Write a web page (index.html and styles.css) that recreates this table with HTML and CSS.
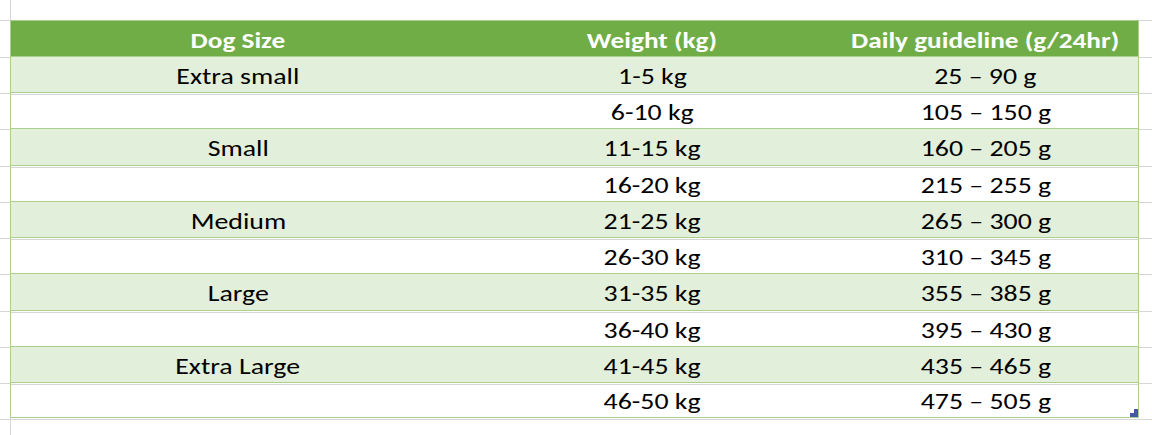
FILE: index.html
```html
<!DOCTYPE html>
<html lang="en">
<head>
<meta charset="utf-8">
<title>Dog food guideline</title>
<link rel="stylesheet" href="styles.css">
</head>
<body>
<div class="sheet">
  <div class="strip-top"></div>

  <div class="row head h36">
    <div class="gut gut-l"></div>
    <div class="cells">
      <div class="cell col-a"><span class="t">Dog Size</span></div>
      <div class="cell col-b"><span class="t">Weight (kg)</span></div>
      <div class="cell col-c"><span class="t">Daily guideline (g/24hr)</span></div>
    </div>
    <div class="gut gut-r"></div>
  </div>

  <div class="row band h36">
    <div class="gut gut-l"></div>
    <div class="cells">
      <div class="cell col-a"><span class="t">Extra small</span></div>
      <div class="cell col-b"><span class="t">1-5 kg</span></div>
      <div class="cell col-c"><span class="t">25 – 90 g</span></div>
    </div>
    <div class="gut gut-r"></div>
  </div>

  <div class="row plain h36">
    <div class="gut gut-l"></div>
    <div class="cells">
      <div class="cell col-a"></div>
      <div class="cell col-b"><span class="t">6-10 kg</span></div>
      <div class="cell col-c"><span class="t">105 – 150 g</span></div>
    </div>
    <div class="gut gut-r"></div>
  </div>

  <div class="row band h37">
    <div class="gut gut-l"></div>
    <div class="cells">
      <div class="cell col-a"><span class="t">Small</span></div>
      <div class="cell col-b"><span class="t">11-15 kg</span></div>
      <div class="cell col-c"><span class="t">160 – 205 g</span></div>
    </div>
    <div class="gut gut-r"></div>
  </div>

  <div class="row plain h36">
    <div class="gut gut-l"></div>
    <div class="cells">
      <div class="cell col-a"></div>
      <div class="cell col-b"><span class="t">16-20 kg</span></div>
      <div class="cell col-c"><span class="t">215 – 255 g</span></div>
    </div>
    <div class="gut gut-r"></div>
  </div>

  <div class="row band h36">
    <div class="gut gut-l"></div>
    <div class="cells">
      <div class="cell col-a"><span class="t">Medium</span></div>
      <div class="cell col-b"><span class="t">21-25 kg</span></div>
      <div class="cell col-c"><span class="t">265 – 300 g</span></div>
    </div>
    <div class="gut gut-r"></div>
  </div>

  <div class="row plain h36">
    <div class="gut gut-l"></div>
    <div class="cells">
      <div class="cell col-a"></div>
      <div class="cell col-b"><span class="t">26-30 kg</span></div>
      <div class="cell col-c"><span class="t">310 – 345 g</span></div>
    </div>
    <div class="gut gut-r"></div>
  </div>

  <div class="row band h37">
    <div class="gut gut-l"></div>
    <div class="cells">
      <div class="cell col-a"><span class="t">Large</span></div>
      <div class="cell col-b"><span class="t">31-35 kg</span></div>
      <div class="cell col-c"><span class="t">355 – 385 g</span></div>
    </div>
    <div class="gut gut-r"></div>
  </div>

  <div class="row plain h36">
    <div class="gut gut-l"></div>
    <div class="cells">
      <div class="cell col-a"></div>
      <div class="cell col-b"><span class="t">36-40 kg</span></div>
      <div class="cell col-c"><span class="t">395 – 430 g</span></div>
    </div>
    <div class="gut gut-r"></div>
  </div>

  <div class="row band h36">
    <div class="gut gut-l"></div>
    <div class="cells">
      <div class="cell col-a"><span class="t">Extra Large</span></div>
      <div class="cell col-b"><span class="t">41-45 kg</span></div>
      <div class="cell col-c"><span class="t">435 – 465 g</span></div>
    </div>
    <div class="gut gut-r"></div>
  </div>

  <div class="row plain last h36">
    <div class="gut gut-l"></div>
    <div class="cells">
      <div class="cell col-a"></div>
      <div class="cell col-b"><span class="t">46-50 kg</span></div>
      <div class="cell col-c"><span class="t">475 – 505 g</span></div>
      <svg class="resize" width="8" height="8" viewBox="0 0 8 8" aria-hidden="true">
        <rect x="4" y="0" width="4" height="8" fill="#4457a8"/>
        <rect x="0" y="4" width="8" height="4" fill="#4457a8"/>
      </svg>
    </div>
    <div class="gut gut-r"></div>
  </div>

  <div class="strip-bottom"></div>
</div>
</body>
</html>
```

FILE: styles.css
```css
html, body {
  margin: 0;
  padding: 0;
  background: #ffffff;
}

body {
  font-family: "Carlito", "Lato", "Liberation Sans", sans-serif;
  font-size: 23px;
  color: #000000;
}

.sheet {
  width: 1152px;
  height: 435px;
  display: flex;
  flex-direction: column;
  overflow: hidden;
  background:
    linear-gradient(to right, transparent 10px, #d6d6d6 10px, #d6d6d6 11px, transparent 11px);
}

.strip-top {
  height: 20px;
  flex: none;
}

.row {
  display: flex;
  flex: none;
  box-sizing: border-box;
}

.h36 { height: 36px; }
.h37 { height: 37px; }

.gut {
  flex: none;
  background: #ffffff linear-gradient(to bottom, transparent 1px, #d6d6d6 1px, #d6d6d6 2px, transparent 2px);
}

.head .gut {
  background: #ffffff linear-gradient(to bottom, #d6d6d6 1px, transparent 1px);
}

.gut-l { width: 10px; }
.gut-r { flex: 1; }

.cells {
  position: relative;
  box-sizing: border-box;
  width: 1129px;
  flex: none;
  display: flex;
  border-left: 1px solid #a9d08e;
  border-right: 1px solid #a9d08e;
  border-top: 1px solid #a9d08e;
}

.head .cells {
  background: #70ad47;
  color: #ffffff;
  font-weight: 700;
}

.band .cells {
  background: #e2efda;
}

.plain .cells {
  background: #ffffff linear-gradient(to bottom, transparent 1px, #d6d6d6 1px, #d6d6d6 2px, transparent 2px);
}

.last .cells {
  border-bottom: 1px solid #a9d08e;
}

.cell {
  flex: none;
  display: flex;
  align-items: center;
  justify-content: center;
  padding-top: 2px;
  box-sizing: border-box;
  white-space: nowrap;
}

.t {
  display: inline-block;
  transform: scaleX(1.21);
}

.head .t {
  transform: scaleX(1.185);
}

.col-a { width: 454px; }
.col-b { width: 374px; }
.col-c { width: 299px; padding-right: 6px; }

.resize {
  position: absolute;
  right: 0;
  bottom: 0;
  display: block;
}

.strip-bottom {
  flex: 1;
  background: linear-gradient(to bottom, transparent 1px, #d6d6d6 1px, #d6d6d6 2px, transparent 2px),
    linear-gradient(to right, transparent 10px, #d6d6d6 10px, #d6d6d6 11px, transparent 11px);
}
```
